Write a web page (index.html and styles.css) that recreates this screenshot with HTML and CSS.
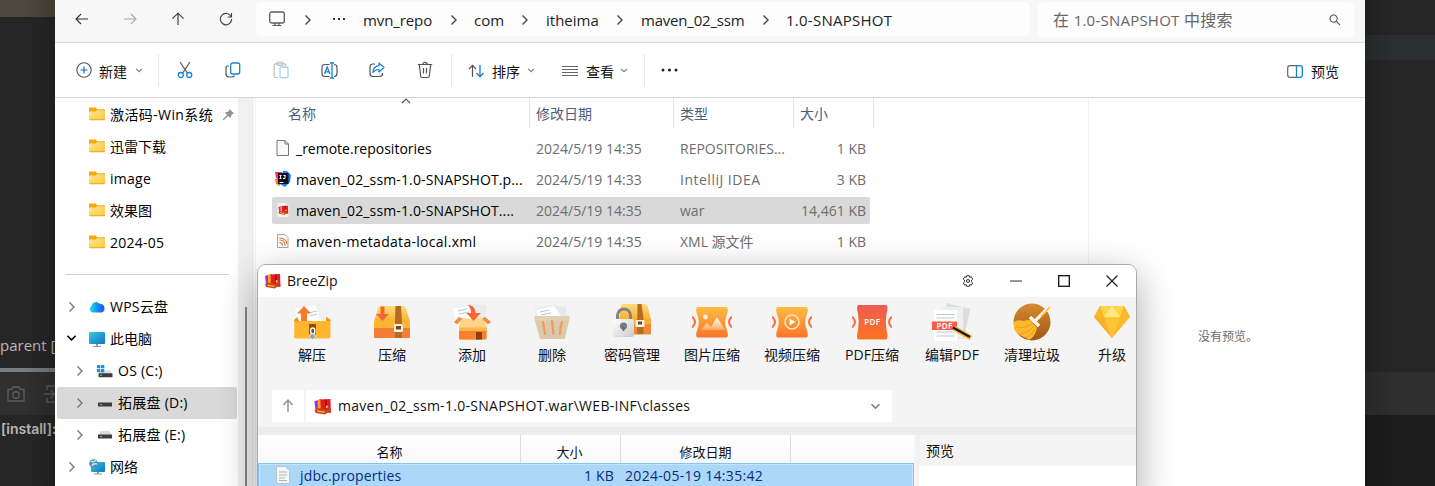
FILE: index.html
```html
<!DOCTYPE html>
<html lang="zh-CN">
<head>
<meta charset="utf-8">
<title>1.0-SNAPSHOT</title>
<link rel="stylesheet" href="styles.css">
</head>
<body>
<svg class="defs" width="0" height="0">
  <defs>
    <linearGradient id="gFolder" x1="0" y1="0" x2="1" y2="1"><stop offset="0" stop-color="#ffe59b"/><stop offset="1" stop-color="#fbc638"/></linearGradient>
    <linearGradient id="gScreen" x1="0" y1="0" x2="1" y2="1"><stop offset="0" stop-color="#35cde0"/><stop offset="1" stop-color="#1273c4"/></linearGradient>
    <linearGradient id="gCloud" x1="0" y1="0" x2="1" y2="0"><stop offset="0" stop-color="#2ee0d8"/><stop offset=".45" stop-color="#1597f5"/><stop offset="1" stop-color="#1a52ea"/></linearGradient>
    <linearGradient id="gOrange" x1="0" y1="0" x2="0" y2="1"><stop offset="0" stop-color="#fdbd42"/><stop offset="1" stop-color="#fb7428"/></linearGradient>
    <linearGradient id="gRed" x1="0" y1="0" x2="0" y2="1"><stop offset="0" stop-color="#f05c50"/><stop offset="1" stop-color="#fb7422"/></linearGradient>
    <linearGradient id="gLid" x1="0" y1="0" x2="0" y2="1"><stop offset="0" stop-color="#fddc7c"/><stop offset="1" stop-color="#fbaf2a"/></linearGradient>
    <linearGradient id="gLock" x1="0" y1="0" x2="1" y2="1"><stop offset="0" stop-color="#ffffff"/><stop offset="1" stop-color="#c9c9c9"/></linearGradient>
    <linearGradient id="gBin" x1="0" y1="0" x2="0" y2="1"><stop offset="0" stop-color="#e0cdb0"/><stop offset="1" stop-color="#d9c7a8"/></linearGradient>
    <linearGradient id="gBrown" x1="0" y1="0" x2="0" y2="1"><stop offset="0" stop-color="#d68a31"/><stop offset="1" stop-color="#a05813"/></linearGradient>
    <linearGradient id="gHill" x1="0" y1="0" x2="0" y2="1"><stop offset="0" stop-color="#fff"/><stop offset="1" stop-color="#fff" stop-opacity=".25"/></linearGradient>
    <symbol id="chevR" viewBox="0 0 8 12"><path d="M1.500 1.500L6 6 1.500 10.500" fill="none" stroke="currentColor" stroke-width="1.400"/></symbol>
    <symbol id="chevD" viewBox="0 0 12 8"><path d="M1.500 1.500L6 6 10.500 1.500" fill="none" stroke="currentColor" stroke-width="1.700"/></symbol>
    <symbol id="folder" viewBox="0 0 16 14"><path d="M0 1.500Q0 .5 1 .5h5.500l1.700 1.800H15q1 0 1 1V7H0z" fill="#f2ab0c"/><path d="M0 4.500h6.500L8 3.200h7q1 0 1 1V12q0 1-1 1H1q-1 0-1-1z" fill="url(#gFolder)"/><path d="M0 12.200q.2 1.100 1 1.100h14q.8 0 1-1.100z" fill="#eaa41b"/></symbol>
    <symbol id="screen" viewBox="0 0 16 15"><rect width="16" height="12" rx="1" fill="url(#gScreen)"/><path d="M7 12h2v2h3v1H4v-1h3z" fill="#8b9aa5"/></symbol>
    <symbol id="drive" viewBox="0 0 14 8"><path d="M2.500 0h9L14 4H0z" fill="#dcdcdf"/><rect y="3.500" width="14" height="4" rx=".6" fill="#3d3d3f"/><rect x="2" y="5" width="2" height="1.200" fill="#46d45c"/></symbol>
    <symbol id="zip" viewBox="0 0 16 16"><path d="M0 3l6-2v11l-5-1z" fill="#a62ae0"/><path d="M3 2l4-1v11l-4-1z" fill="#f7a51e"/><path d="M5.500 1.500L15 1l.5 13L6 13z" fill="#e31b23"/><path d="M10 1.300h1.500l.5 9h-2z" fill="#a80c20"/><path d="M0 11l5-1.500 6 1.500 1-2.500 2-1 .5 4L10 15.500 1 14z" fill="#cf4318"/><path d="M2 11.500l5 1 3 .3-1 1-6-.8zM11 7l2 .5-1 2-1.500 0z" fill="#ffc845"/></symbol>
  </defs>
</svg>

<div class="desktop">
  <div class="ide ide-left">
    <div class="ide-top"></div>
    <div class="ide-tree"><span>parent [</span></div>
    <div class="ide-split"></div>
    <div class="ide-tools">
      <svg width="18" height="16" viewBox="0 0 18 16"><path d="M1 3.500h3.500l1.500-2.500h6l1.500 2.500H17v11.500H1z" fill="none" stroke="#5b5b5b" stroke-width="1.400"/><circle cx="9" cy="9" r="3.300" fill="none" stroke="#5b5b5b" stroke-width="1.400"/></svg>
      <svg width="16" height="18" viewBox="0 0 16 18"><path d="M3 5V1h12v16H3v-4M0 9h10M6.500 5l4 4-4 4" fill="none" stroke="#5b5b5b" stroke-width="1.400"/></svg>
    </div>
    <div class="ide-log">[install]:</div>
  </div>
  <div class="ide ide-right"><div class="r1"></div><div class="r2"></div><div class="r3"></div><div class="r4"></div><div class="r5"></div></div>

  <main class="explorer">
    <div class="address">
      <div class="nav">
        <svg width="14" height="12" viewBox="0 0 14 12"><path d="M13 6H1M6 1L1 6l5 5" fill="none" stroke="#333" stroke-width="1.100"/></svg>
        <svg width="14" height="12" viewBox="0 0 14 12"><path d="M1 6h12M8 1l5 5-5 5" fill="none" stroke="#aaa" stroke-width="1.100"/></svg>
        <svg width="14" height="14" viewBox="0 0 14 14"><path d="M7 13V1.500M1.500 6.700L7 1.200l5.500 5.500" fill="none" stroke="#333" stroke-width="1.100"/></svg>
        <svg width="14" height="14" viewBox="0 0 14 14"><path d="M12.300 5A5.700 5.700 0 1 0 12.700 7M12.500 1v4H8.700" fill="none" stroke="#444" stroke-width="1.100"/></svg>
      </div>
      <div class="crumbs">
        <svg class="mon" width="16" height="16" viewBox="0 0 16 16"><rect x=".7" y="1" width="14.600" height="11" rx="2" fill="none" stroke="#5c5c5c" stroke-width="1.300"/><path d="M6 12v2M10 12v2M3.500 14.500h9" stroke="#5c5c5c" stroke-width="1.200"/></svg>
        <svg class="cr" width="8" height="12"><use href="#chevR"/></svg>
        <svg class="more" width="14" height="4" viewBox="0 0 14 4"><path d="M1 1h2v2H1zM6 1h2v2H6zM11 1h2v2h-2z" fill="#333"/></svg>
        <span class="c1">mvn_repo</span><svg class="cr" width="8" height="12"><use href="#chevR"/></svg>
        <span class="c2">com</span><svg class="cr" width="8" height="12"><use href="#chevR"/></svg>
        <span class="c3">itheima</span><svg class="cr" width="8" height="12"><use href="#chevR"/></svg>
        <span class="c4">maven_02_ssm</span><svg class="cr" width="8" height="12"><use href="#chevR"/></svg>
        <span class="c5">1.0-SNAPSHOT</span>
      </div>
      <div class="search"><span>在 <i>1.0-SNAPSHOT</i> 中搜索</span>
        <svg width="12" height="12" viewBox="0 0 13 13"><circle cx="5" cy="5" r="3.900" fill="none" stroke="#555" stroke-width="1.200"/><path d="M8 8l4 4" stroke="#555" stroke-width="1.300"/></svg></div>
    </div>

    <div class="commands">
      <svg width="16" height="16" viewBox="0 0 16 16"><circle cx="8" cy="8" r="7.200" fill="none" stroke="#555" stroke-width="1.100"/><path d="M8 4.500v7M4.500 8h7" stroke="#0b74cf" stroke-width="1.200"/></svg>
      <span>新建</span><svg class="cd" width="8" height="5"><use href="#chevD"/></svg><b></b>
      <svg width="16" height="18" viewBox="0 0 16 18"><path d="M3 1l7.300 11M13 1L5.700 12" stroke="#555" stroke-width="1.200"/><circle cx="3.800" cy="14" r="2.500" fill="none" stroke="#1583d8" stroke-width="1.300"/><circle cx="12.200" cy="14" r="2.500" fill="none" stroke="#1583d8" stroke-width="1.300"/></svg>
      <svg width="16" height="16" viewBox="0 0 16 16"><path d="M4 4H3Q1 4 1 6v6q0 3 3 3h3q2 0 2.500-1.500" fill="none" stroke="#555" stroke-width="1.200"/><rect x="5.700" y="1" width="9" height="11" rx="2" fill="none" stroke="#1583d8" stroke-width="1.300"/></svg>
      <svg width="16" height="18" viewBox="0 0 16 18"><path d="M5 16.500H2.500Q1.200 16.500 1.200 15V4q0-1.200 1.300-1.200h9Q12.700 2.800 12.700 4v1M4 2.800Q4 1 5.500 1h3Q10 1 10 2.800T8.500 4.500h-3Q4 4.500 4 2.800z" fill="none" stroke="#bdbdbd" stroke-width="1.200"/><rect x="7" y="6" width="8" height="10.600" rx="1.200" fill="none" stroke="#a7cfee" stroke-width="1.300"/></svg>
      <svg width="17" height="17" viewBox="0 0 17 17"><path d="M8.500 2.500H4Q1 2.500 1 5v6.500Q1 14.500 4 14.500h4.500M13 2.500q3 0 3 3v6q0 3-3 3" fill="none" stroke="#555" stroke-width="1.200"/><path d="M9 1h4M9 16h4M11 1v15M3.500 12L6.200 5l2.700 7M4.300 9.800H8" fill="none" stroke="#1583d8" stroke-width="1.300"/></svg>
      <svg width="16" height="16" viewBox="0 0 16 16"><path d="M6 2H4Q1 2 1 5v6.500q0 3 3 3h6.500q3 0 3-3V11" fill="none" stroke="#555" stroke-width="1.200"/><path d="M10 1l5 4.500-5 4.500V7.500Q6 7.500 3.800 10.500 4 4.500 10 3.700z" fill="none" stroke="#1583d8" stroke-width="1.200" stroke-linejoin="round"/></svg>
      <svg width="16" height="18" viewBox="0 0 16 18"><path d="M.8 3.500h14.400M2.300 3.500l1.400 11.500q.2 1.500 1.500 1.500h5.600q1.300 0 1.500-1.500l1.400-11.500M5.800 3.500Q5.800 1.300 8 1.300t2.200 2.200M6.500 7v5.500M9.500 7v5.500" fill="none" stroke="#555" stroke-width="1.200"/></svg><b></b>
      <svg class="low" width="17" height="14" viewBox="0 0 17 14"><path d="M4.500 13V1.500M1 5l3.500-3.700L8 5" fill="none" stroke="#555" stroke-width="1.200"/><path d="M12 1v11.500M8.500 9l3.500 3.700L15.500 9" fill="none" stroke="#1583d8" stroke-width="1.300"/></svg>
      <span>排序</span><svg class="cd" width="8" height="5"><use href="#chevD"/></svg>
      <svg class="low" width="16" height="12" viewBox="0 0 16 12"><path d="M0 1.500h16M0 4.500h16M0 7.500h16M0 10.500h16" stroke="#666" stroke-width="1"/></svg>
      <span>查看</span><svg class="cd" width="8" height="5"><use href="#chevD"/></svg><b></b>
      <svg width="17" height="4" viewBox="0 0 17 4"><circle cx="2" cy="2" r="1.500" fill="#222"/><circle cx="8.500" cy="2" r="1.500" fill="#222"/><circle cx="15" cy="2" r="1.500" fill="#222"/></svg>
      <svg class="low" width="16" height="13" viewBox="0 0 16 13"><path d="M9.500 .7H3Q.7.7.7 3v7q0 2.300 2.300 2.300h6.500" fill="none" stroke="#666" stroke-width="1.200"/><path d="M9.500.7H13q2.300 0 2.300 2.300v7q0 2.300-2.300 2.300H9.500z" fill="none" stroke="#1583d8" stroke-width="1.300"/></svg>
      <span>预览</span>
    </div>

    <div class="body">
      <div class="sidebar">
        <ul class="tree">
          <li class="lv0"><svg width="16" height="14"><use href="#folder"/></svg><span class="wpin">激活码-Win系统</span><svg class="pin" width="11" height="11" viewBox="0 0 11 11"><path d="M6.500 0L11 4.500 8.800 5.500 7.500 9 5 7 1 11H0v-1l4-4L2 3.500l3.500-1z" fill="#8a979f"/></svg></li>
          <li class="lv0"><svg width="16" height="14"><use href="#folder"/></svg><span>迅雷下载</span></li>
          <li class="lv0"><svg width="16" height="14"><use href="#folder"/></svg><span class="wide">image</span></li>
          <li class="lv0"><svg width="16" height="14"><use href="#folder"/></svg><span>效果图</span></li>
          <li class="lv0"><svg width="16" height="14"><use href="#folder"/></svg><span class="wide">2024-05</span></li>
        </ul>
        <div class="rule"></div>
        <ul class="tree">
          <li class="lv1"><svg class="ar" width="8" height="12"><use href="#chevR"/></svg><svg width="16" height="12" viewBox="0 0 16 12"><path d="M3.500 11.500A3.500 3.500 0 0 1 2.500 5 4.500 4.500 0 0 1 10.500 2.800 4.500 4.500 0 0 1 12.500 11.500z" fill="url(#gCloud)"/></svg><span class="wide">WPS云盘</span></li>
          <li class="lv1"><svg class="ad" width="11" height="8"><use href="#chevD"/></svg><svg width="16" height="15"><use href="#screen"/></svg><span>此电脑</span></li>
          <li class="lv2"><svg class="ar" width="8" height="12"><use href="#chevR"/></svg><svg class="os" width="16" height="13" viewBox="0 0 16 13"><path d="M3 5.500h10.500L15 9H2z" fill="#dcdcdf"/><rect x="1.500" y="8.200" width="14" height="4" rx=".6" fill="#3d3d3f"/><rect x="3" y="9.700" width="2" height="1.200" fill="#46d45c"/><path d="M0 0h3.300v3.300H0zM4 0h3.300v3.300H4zM0 4h3.300v3.300H0zM4 4h3.300v3.300H4z" fill="#2191d8"/></svg><span class="wide">OS (C:)</span></li>
          <li class="lv2 on"><svg class="ar" width="8" height="12"><use href="#chevR"/></svg><svg class="dv" width="14" height="8"><use href="#drive"/></svg><span class="wide">拓展盘 (D:)</span></li>
          <li class="lv2"><svg class="ar" width="8" height="12"><use href="#chevR"/></svg><svg class="dv" width="14" height="8"><use href="#drive"/></svg><span class="wide">拓展盘 (E:)</span></li>
          <li class="lv1"><svg class="ar" width="8" height="12"><use href="#chevR"/></svg><svg width="16" height="16" viewBox="0 0 16 16"><rect x="2" y="3" width="14" height="10" rx="1" fill="url(#gScreen)"/><path d="M8 13h2v1.500h3v1H5v-1h3z" fill="#8b9aa5"/><circle cx="4.500" cy="4.500" r="4.300" fill="#4d8fb5"/><path d="M2 2q2 2 5-1M3 7q1-3 5-2" stroke="#c8e2ea" stroke-width="1.500" fill="none"/></svg><span>网络</span></li>
        </ul>
      </div>
      <div class="track"><div class="thumb"></div></div>

      <div class="files">
        <div class="row head"><span>名称</span><span>修改日期</span><span>类型</span><span>大小</span>
          <svg class="sort" width="10" height="6" viewBox="0 0 10 6"><path d="M1 5l4-4 4 4" fill="none" stroke="#555" stroke-width="1.100"/></svg></div>
        <div class="row"><div><svg class="doc" width="16" height="16" viewBox="0 0 16 16"><path d="M2 .5h8l3.500 3.500v11.500H2zM10 .5V4h3.500" fill="#fafafa" stroke="#777"/></svg><span class="f1">_remote.repositories</span></div><span>2024/5/19 14:35</span><span class="ty1">REPOSITORIES...</span><span>1 KB</span></div>
        <div class="row"><div><svg width="16" height="16" viewBox="0 0 16 16"><path d="M0 1l7 0-3 8-3-2z" fill="#ff2d78"/><path d="M0 8l6 0-1 7-4-2z" fill="#fc801d"/><path d="M8 0h4l4 4-1 7-5 5-5-3z" fill="#1183ec"/><rect x="3" y="2" width="10.500" height="11" fill="#151018"/><path d="M4.500 4.500h2M5.500 4.500v3M4.500 7.500h2M8.500 4.500h2M10 4.500v3H8M4.500 11.500h4" stroke="#fff" fill="none"/></svg><span class="f2">maven_02_ssm-1.0-SNAPSHOT.p...</span></div><span>2024/5/19 14:33</span><span class="ty2">IntelliJ IDEA</span><span>3 KB</span></div>
        <div class="row on"><div><svg width="16" height="16" viewBox="0 0 16 16"><path d="M2.500 1h8l3 3v11h-11z" fill="#f4f2f1"/><svg x="3" y="3" width="11" height="10"><use href="#zip"/></svg></svg><span class="f2">maven_02_ssm-1.0-SNAPSHOT....</span></div><span>2024/5/19 14:35</span><span>war</span><span>14,461 KB</span></div>
        <div class="row"><div><svg width="16" height="16" viewBox="0 0 16 16"><path d="M2.500 1.500h7.500L13 4.500v10H2.500z" fill="#fafafa" stroke="#aaa"/><path d="M4.500 9.500q3 0 3 3M4.500 7q5.500 0 5.500 5.500M4.500 5q7 .5 7.500 6" stroke="#df7840" stroke-width="1.200" fill="none"/></svg><span class="f4">maven-metadata-local.xml</span></div><span>2024/5/19 14:35</span><span>XML 源文件</span><span>1 KB</span></div>
      </div>
      <div class="preview">没有预览。</div>
    </div>
  </main>

  <section class="breezip">
    <div class="title">
      <svg width="16" height="16"><use href="#zip"/></svg><span>BreeZip</span>
      <svg width="12" height="12" viewBox="0 0 12 12"><path d="M4.700.7h2.600l.4 1.600 1.600-.5 1.400 2.300L9.500 5.200v1.600l1.200 1.100-1.400 2.300-1.600-.5-.4 1.600H4.700l-.4-1.600-1.600.5L1.300 7.900l1.200-1.100V5.200L1.300 4.100l1.400-2.300 1.600.5z" fill="none" stroke="#333"/><circle cx="6" cy="6" r="1.500" fill="none" stroke="#333"/></svg>
      <svg width="12" height="12" viewBox="0 0 12 12"><path d="M0 6h12" stroke="#999" stroke-width="2"/></svg>
      <svg width="12" height="12" viewBox="0 0 12 12"><rect x=".7" y=".7" width="10.600" height="10.600" fill="none" stroke="#111" stroke-width="1.300"/></svg>
      <svg width="12" height="12" viewBox="0 0 12 12"><path d="M.5.5l11 11M11.500.5l-11 11" stroke="#222" stroke-width="1.200"/></svg>
    </div>
    <div class="tools">
      <div><svg width="40" height="40" viewBox="0 0 40 40"><path d="M2 5l15-3 16-.5 4 2-2 16H4z" fill="#f0f0f1"/><path d="M3 6l21-3 5 18H5z" fill="#fff"/><path d="M16 11l9-2M18 14l7-2" stroke="#b9c4d6"/><path d="M2.300 18l3-3v4h29v-4l4.200 3v17q0 1.500-1.500 1.500H4q-1.700 0-1.700-1.500z" fill="#ffb52c"/><path d="M2.300 18l3-3 2 4.500H2.300zM34 19l.3-4 4.200 3v1z" fill="#ef9417"/><path d="M9 19v-7.500H5L12 4l7 7.500h-4V19z" fill="#fb7a2c"/><rect x="17" y="22" width="7" height="14.500" fill="#8b4a1c"/><rect x="18.700" y="26" width="4" height="6" rx="2" fill="none" stroke="#fff" stroke-width="1.400"/><circle cx="20.500" cy="34.500" r="3" fill="#9aa1ae" stroke="#fff" stroke-width="1"/></svg><span>解压</span></div>
      <div><svg width="40" height="40" viewBox="0 0 40 40"><path d="M6 6Q6.500 4 8.500 4h23q2 0 2.500 2l4 14H2z" fill="url(#gLid)"/><path d="M2 19h36v8H2z" fill="#fcb32f"/><path d="M2 26h36v10H2z" fill="#f47c35"/><path d="M23.500 4H29l1 15v17h-7V19z" fill="#b36c22"/><rect x="22" y="22" width="9" height="8" rx="1.500" fill="#fff3e3"/><path d="M24 24h5v3.500h-5z" fill="#7e4216"/><path d="M8.500 4.500h4V12H17l-6.500 7L4 12h4.500z" fill="#f56434"/></svg><span>压缩</span></div>
      <div><svg width="40" height="40" viewBox="0 0 40 40"><path d="M1 5l20-3 14 1-3 30H10z" fill="#ececed"/><path d="M1 6l19-3 5 24-18 5z" fill="#fff"/><path d="M6 9l9-2M7 12l10-2" stroke="#b9c4d6"/><path d="M10 17h20l5 9-.5 10q-.3 1.500-2 1.500H8.500Q7 37.500 7 36V25z" fill="#fbb44e"/><path d="M9 16.500h22l4.500 9h-28z" fill="#ffd487"/><path d="M10.500 16.500L5 22.500 2 20l5-5zM30 16.500l6 6 3-2.500-6-5z" fill="#f28a42"/><path d="M7 29h27.500v7q-.3 1.500-2 1.500H8.500Q7 37.500 7 36z" fill="#f9802e"/><path d="M24 30h6v7.500h-6z" fill="#8f3f0e"/><path d="M16 3q7 0 7.500 8H29l-7.500 8-7-8h4.500Q19 6 16 3z" fill="#f86632"/></svg><span>添加</span></div>
      <div><svg width="40" height="40" viewBox="0 0 40 40"><path d="M3 7l14-4 17 2 2 14H6z" fill="#e9e9eb"/><path d="M4 8l18-4 10 14H7z" fill="#fff"/><path d="M8 10l9-2M9 13l10-2" stroke="#b9c4d6"/><path d="M3 14h34v5l-4 17q-.3 1-2 1H9.500Q8 37 7.700 36L3 19z" fill="url(#gBin)"/><path d="M2.500 14.500h35v4h-35z" fill="#e2d1b6"/><path d="M11 20l2 12M20 19l1.500 13M30 20q-2 5-2 12" stroke="#f09b5e" stroke-width="2.200" stroke-linecap="round" fill="none"/></svg><span>删除</span></div>
      <div><svg width="40" height="40" viewBox="0 0 40 40"><path d="M9 4Q9.500 2 11 2h22q2 0 2.500 2L39 18H7z" fill="url(#gLid)"/><path d="M7 17h32v14q0 1.500-1.500 1.500H7z" fill="#ef883a"/><path d="M7 17h32v5H7z" fill="#fbaa31"/><path d="M25.500 2h4l2 15v15H25z" fill="#b36c22"/><rect x="23.500" y="18" width="9" height="7" rx="1" fill="#fff3e3"/><path d="M26 19.500h4v3h-4z" fill="#7e4216"/><path d="M5.500 18v-4.500a6.500 6.500 0 0 1 13 0V18" fill="none" stroke="#858585" stroke-width="3"/><rect x="1" y="17" width="21" height="18" rx="2" fill="url(#gLock)"/><circle cx="11.500" cy="24" r="3.600" fill="#737b85"/><path d="M10.500 25h2v4h-2z" fill="#626970"/></svg><span>密码管理</span></div>
      <div><svg width="40" height="40" viewBox="0 0 40 40"><path d="M5 5h30q2 2-.5 8.500t0 13.500q2.500 7 .5 8.500H5q-2-2 .5-8.500t0-13.500Q3 7 5 5z" fill="url(#gOrange)"/><circle cx="13.500" cy="15" r="2.400" fill="#fff" opacity=".85"/><path d="M9 28l6-7 4 4 6-10 8 13z" fill="url(#gHill)"/><path d="M0 14.500q6 5.500 0 11M40 14.500q-6 5.500 0 11" fill="none" stroke="#f87343" stroke-width="2.200"/></svg><span>图片压缩</span></div>
      <div><svg width="40" height="40" viewBox="0 0 40 40"><path d="M5 5h30q2 2-.5 8.500t0 13.500q2.500 7 .5 8.500H5q-2-2 .5-8.500t0-13.500Q3 7 5 5z" fill="url(#gOrange)"/><circle cx="20" cy="20" r="7" fill="none" stroke="#ffe2c6" stroke-width="1.600"/><path d="M17.500 16.500l6 3.500-6 3.500z" fill="#fff"/><path d="M0 14.500q6 5.500 0 11M40 14.500q-6 5.500 0 11" fill="none" stroke="#f87343" stroke-width="2.200"/></svg><span>视频压缩</span></div>
      <div><svg width="40" height="40" viewBox="0 0 40 40"><path d="M6 3h28.500q2 1.500 0 9-1.500 8 0 16 2 8 0 9.500H6q-2-1.500 0-9.500 1.500-8 0-16Q4 4.500 6 3z" fill="url(#gRed)"/><path d="M0 14.500q6 5.500 0 11M40 14.500q-6 5.500 0 11" fill="none" stroke="#f87343" stroke-width="2.200"/><text x="20.300" y="23.300" text-anchor="middle" class="pdf">PDF</text></svg><span>PDF压缩</span></div>
      <div><svg width="40" height="40" viewBox="0 0 40 40"><path d="M15 1l23 6-6 30-20-3z" fill="#dcdcdd"/><path d="M9 5h22v31H9z" fill="#efefef"/><path d="M2 8h23v31H2z" fill="#fff"/><path d="M4.500 12.500h18M4.500 16h18M4.500 30h18M4.500 34h18" stroke="#bcc4d4"/><path d="M0 19.500h25V28H0z" fill="#f45e45"/><path d="M22 26l17 10" stroke="#f5b83c" stroke-width="5"/><path d="M21 25.500l17 9.500" stroke="#1b1b1b" stroke-width="2.400"/><text x="12.500" y="26.700" text-anchor="middle" class="pdf">PDF</text></svg><span>编辑PDF</span></div>
      <div><svg width="40" height="40" viewBox="0 0 40 40"><circle cx="20" cy="20" r="18.500" fill="url(#gBrown)"/><path d="M2 20q5-3 9-1 4-1 7-1l7 8q-2 9-8 12l-3-2Q4 32 2 27z" fill="#fdb92c"/><path d="M3 25q10 2 17-3M8 32q8-1 13-7M14 36q6-3 9-9" stroke="#ef9826" fill="none"/><path d="M18 15l9 9" stroke="#fff" stroke-width="3.500"/><path d="M23 19L37 5" stroke="#fff1d3" stroke-width="3.200" stroke-linecap="round"/><path d="M29 14.500L38 5" stroke="#ffbe3c" stroke-width="1.500"/></svg><span>清理垃圾</span></div>
      <div><svg width="40" height="40" viewBox="0 0 40 40"><path d="M8 4h24l6 11-18 21L2 15z" fill="#fdb827"/><path d="M8 4h24l-4 11H12z" fill="#fed44c"/><path d="M12 15h16l-8 21z" fill="#fdc434"/><path d="M2 15h10l8 21z" fill="#fcae2c"/><path d="M8 4L2 15h10zM32 4l6 11H28z" fill="#fcb728"/><path d="M12 15l8-11 8 11z" fill="#ffe683"/></svg><span>升级</span></div>
    </div>
    <div class="path">
      <div class="up"><svg width="12" height="14" viewBox="0 0 12 14"><path d="M6 13V1.500M1.200 6L6 1.200 10.800 6" fill="none" stroke="#999" stroke-width="1.600"/></svg></div>
      <div class="loc"><svg width="18" height="17"><use href="#zip"/></svg><span>maven_02_ssm-1.0-SNAPSHOT.war\WEB-INF\classes</span><svg class="dd" width="11" height="7"><use href="#chevD"/></svg></div>
    </div>
    <div class="band"></div>
    <div class="lower">
      <div class="list">
        <div class="lh"><span>名称</span><span>大小</span><span>修改日期</span></div>
        <div class="lr"><svg width="14" height="18" viewBox="0 0 14 18"><path d="M.5.5h9l4 4v13H.5z" fill="#f7f7f7" stroke="#bcc4ca"/><path d="M3 6h8M3 9h8M3 12h6M3 14.500h8" stroke="#a9b1b8"/></svg><span class="nm">jdbc.properties</span><span class="sz">1 KB</span><span class="dt">2024-05-19 14:35:42</span></div>
      </div>
      <div class="pv"><div>预览</div></div>
    </div>
  </section>
</div>
</body>
</html>
```
FILE: styles.css
```css
* { box-sizing: border-box; }
body { margin: 0; overflow: hidden; font: 14px/20px "Open Sans", "Noto Sans CJK SC", sans-serif; color: #111; white-space: nowrap; }
svg { flex: none; display: block; }
.defs { position: absolute; }
.desktop { position: relative; width: 1435px; height: 486px; overflow: hidden; background: #262626; }

/* Dark IDE behind the windows */
.ide { position: absolute; top: 0; height: 486px; display: flex; flex-direction: column; }
.ide-left { left: 0; width: 60px; color: #b9b9b9; }
.ide-top { height: 17px; background: #4c483c; }
.ide-tree { height: 351px; display: flex; align-items: flex-end; padding-bottom: 13px; font-size: 15px; }
.ide-split { height: 4px; background: #787d81; }
.ide-tools { height: 43px; background: #303030; display: flex; align-items: center; gap: 19px; padding-left: 7px; }
.ide-log { height: 71px; padding: 4px 0 0 1px; font: 600 14px/20px Inter, sans-serif; color: #b9b9b9; }
.ide-right { left: 1365px; width: 70px; }
.ide-right::after, .ide-left::after { content: ""; position: absolute; top: 0; bottom: 0; width: 30px; }
.ide-right::after { left: 0; background: linear-gradient(to right, rgba(0,0,0,.18), rgba(0,0,0,0)); }
.ide-left::after { right: 5px; background: linear-gradient(to left, rgba(0,0,0,.18), rgba(0,0,0,0)); }
.r1 { height: 35px; background: #262626; }
.r2 { height: 25px; background: #2a2f30; }
.r3 { height: 312px; background: #262626; }
.r4 { height: 43px; background: #2f2f2f; }
.r5 { height: 71px; background: #1d1d1d; }

/* Explorer window */
.explorer { position: absolute; left: 55px; top: 0; width: 1310px; height: 486px; background: #fff; }
.address { height: 43px; background: #f7f7f7; border-bottom: 1px solid #d8d8d8; display: flex; align-items: flex-start; }
.nav { width: 201px; height: 38px; padding-left: 20px; display: grid; grid-template-columns: 48px 48px 48px 48px; align-items: center; }
.crumbs { width: 774px; height: 34px; margin-top: 2px; background: #fdfdfd; border-radius: 5px; display: grid; align-items: center; padding: 2px 0 0 13px; font-size: 15px; color: #222;
  grid-template-columns: 35px 28px 31px 87px 24px 47px 25px 70px 25px 121px 24px auto; }
.crumbs .cr { color: #444; }
.crumbs .mon { margin-top: -3px; }
.crumbs .more { margin-top: -3px; }
.c1 { letter-spacing: -.1px; }
.c4 { letter-spacing: -.2px; }
.c5 { letter-spacing: .25px; }
.search { width: 316px; height: 35px; margin: 2px 0 0 8px; background: #fdfdfd; border-radius: 5px; display: flex; align-items: center; justify-content: space-between; padding: 1px 13px 0 15px; font-size: 16px; color: #666; }
.search span { letter-spacing: .23px; }
.search i { font-style: normal; font-size: 15px; }
.commands { height: 55px; border-bottom: 1px solid #d6d6d6; padding-left: 21px; display: grid; align-items: center; color: #111;
  grid-template-columns: 23px 36px 23px 19px 48px 48px 48px 48px 48px 34px 17px 24px 35px 35px 24px 34px 24px 17px 626px 24px auto; }
.commands span { padding-top: 3px; }
.commands .low { margin-top: 2px; }
.commands b { width: 1px; height: 32px; background: #e6e6e6; }
.commands .cd { color: #777; }
.body { display: flex; height: 388px; }

.sidebar { width: 183px; }
.tree { list-style: none; margin: 0; padding: 0 0 0 2px; color: #000; }
.tree li { height: 32px; display: flex; align-items: center; }
.tree li span { padding-left: 5px; }
.lv0 { padding-left: 32px; }
.lv0 svg + span { padding-top: 1px; }
.tree .wpin { width: 118px; letter-spacing: .4px; }
.wide { letter-spacing: .25px; }
.rule { height: 1px; background: #d1d1d1; margin: 16px 9px 16px 10px; }
.ar { margin: 0 13px 0 11px; color: #777; }
.ad { margin: -2px 12px 0 9px; }
.lv2 { padding-left: 8px; }
.lv2 .dv { margin: 0 1px; }
.lv2.on { background: #d9d9d9; border-radius: 2px; width: 180px; }
.track { width: 16px; background: #f0f0f0; padding: 209px 0 0 7px; }
.thumb { width: 2px; height: 180px; background: #858585; }

.files { width: 834px; margin-left: 1px; padding-left: 16px; border-left: 1px solid #f2f2f2; border-right: 1px solid #f2f2f2; }
.row { width: 598px; height: 27px; margin-bottom: 4px; display: grid; grid-template-columns: 264px 144px 108px 78px; align-items: center; color: #6d6d6d; }
.row > div { display: flex; align-items: center; gap: 5px; padding-left: 3px; color: #000; }
.row > div svg { margin-top: -2px; }
.row > span:last-child { text-align: right; }
.row.on { background: #d9d9d9; border-radius: 2px; }
.row.head { position: relative; height: 30px; margin-bottom: 7px; width: 602px; color: #4c607a; grid-template-columns: 258px 144px 120px 80px; align-items: stretch; }
.row.head span { border-right: 1px solid #e3e3e3; padding: 7px 0 0 6px; text-align: left; line-height: 18px; }
.row.head span:first-child { padding-left: 16px; }
.sort { position: absolute; left: 129px; top: 0; }
.f2 { letter-spacing: .13px; }
.f4 { letter-spacing: .29px; }
.ty2 { letter-spacing: .5px; }
.preview { flex: 1; padding: 230px 0 0 109px; font-size: 12px; line-height: 18px; color: #6d6d6d; }

/* Archive window */
.breezip { position: absolute; left: 257px; top: 264px; width: 880px; height: 240px; border: 1px solid #aaa; border-radius: 9px 9px 0 0; background: #f4f4f4; overflow: hidden; box-shadow: 0 12px 38px rgba(0,0,0,.34); }
.title { height: 32px; background: #fff; display: grid; align-items: center; padding-left: 7px; grid-template-columns: 22px 675px 48px 48px 48px 12px; }
.tools { height: 93px; display: flex; padding-left: 14px; }
.tools > div { flex: none; width: 80px; display: flex; flex-direction: column; align-items: center; padding-top: 5px; }
.tools span { line-height: 20px; padding-top: 3px; }
.pdf { font: 600 8px "Open Sans", sans-serif; fill: #fff; letter-spacing: .4px; }
.path { height: 32px; display: flex; gap: 2px; padding-left: 14px; }
.up { width: 32px; background: #fff; display: grid; place-items: center; }
.loc { width: 586px; background: #fff; display: flex; align-items: center; gap: 6px; padding-left: 8px; }
.loc span { width: 526px; letter-spacing: .28px; }
.dd { color: #777; }
.band { height: 8px; margin-top: 5px; background: #ededed; }
.lower { display: flex; height: 60px; }
.list { width: 656px; background: #fff; }
.lh { height: 28px; display: grid; grid-template-columns: 263px 100px 170px; font-size: 13px; background: linear-gradient(#fff, #f7f8fa); }
.lh span { text-align: center; padding-top: 7px; border-right: 1px solid #dcdcdc; }
.lh span:first-child { padding-left: 1px; }
.lh span:nth-child(2) { padding-right: 2px; }
.lr { height: 32px; display: flex; align-items: flex-start; padding: 2px 0 0 17px; border: 1px solid #84c3f2; box-shadow: inset 0 0 0 1px #c3e3fa; background: #abd8f8; color: #0b2a78; }
.lr .nm { width: 294px; padding-left: 10px; letter-spacing: .15px; }
.lr .sz { width: 41px; letter-spacing: .2px; }
.lr .dt { letter-spacing: .32px; }
.pv { flex: 1; margin-left: 4px; background: #fff; border-left: 1px solid #eee; }
.pv div { height: 31px; padding: 6px 0 0 7px; background: #f4f4f4; }
```
